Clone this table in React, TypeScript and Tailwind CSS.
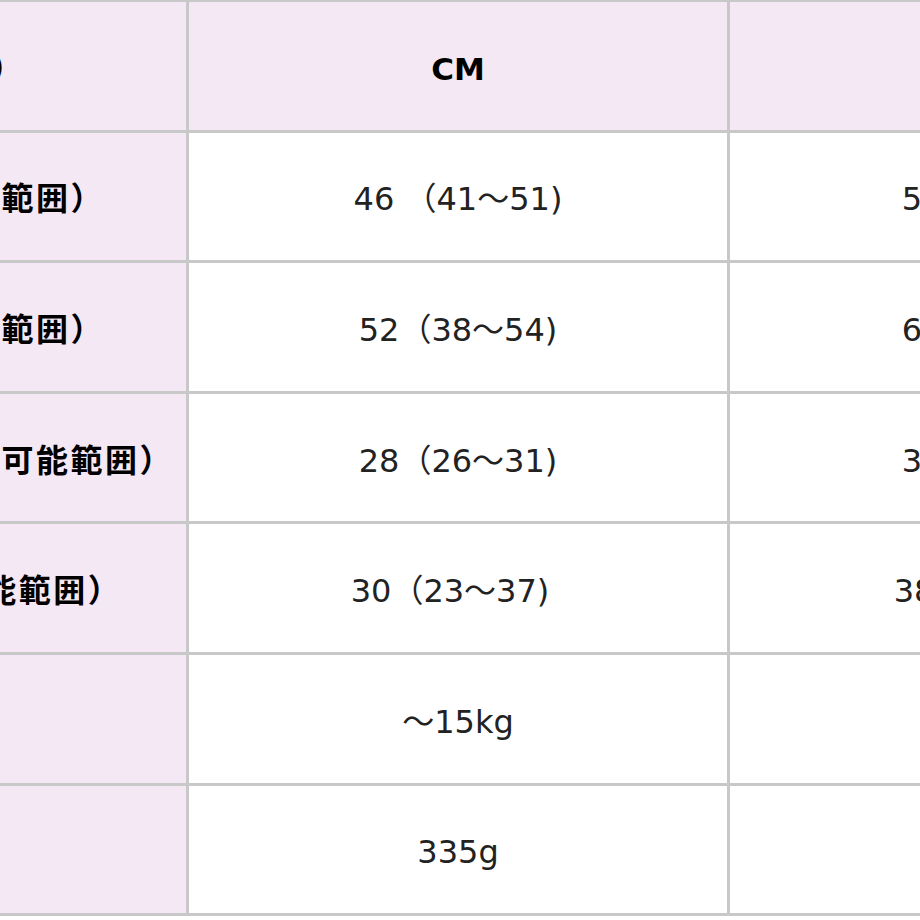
import React from "react";

const labels = [
  "サイズ（単位）",
  "肩ベルト（調節可能範囲）",
  "ウエスト（調節可能範囲）",
  "背当て部分の高さ（調節可能範囲）",
  "腰ベルト長（調節可能範囲）",
  "対象体重",
  "重量",
];

const col2 = [
  "CM",
  "46 （41～51)",
  "52（38～54)",
  "28（26～31)",
  "30（23～37)",
  "～15kg",
  "335g",
];

const col3 = [
  "INCH",
  "56（50～60)",
  "64（58～70)",
  "34（30～38)",
  "38（30～46)",
  "～33lb",
  "11.8oz",
];

export default function App() {
  return (
    <div className="w-[920px] h-[920px] overflow-hidden bg-white font-['DejaVu_Sans','Noto_Sans_CJK_JP',sans-serif]">
      <div className="-ml-[393px] -mt-px w-fit grid grid-cols-[576px_538px_542px] gap-[3px] p-[3px] bg-[#c8c8c8]">
        {labels.map((label, i) => {
          const head = i === 0;
          return (
            <React.Fragment key={i}>
              <div className="h-[127.6px] pt-[6px] bg-[#f4e8f4] flex items-center justify-center">
                <span
                  className={
                    "text-[32px] font-bold tracking-[2.5px] text-black whitespace-nowrap " +
                    (head ? "pl-[14px]" : "")
                  }
                >
                  {label}
                </span>
              </div>
              <div
                className={
                  "h-[127.6px] pt-[6px] flex items-center justify-center " +
                  (head ? "bg-[#f4e8f4]" : "bg-white")
                }
              >
                {head ? (
                  <span className="text-[31px] font-bold text-black">{col2[i]}</span>
                ) : (
                  <span
                    className={
                      "text-[32px] text-[#222] whitespace-nowrap " +
                      (i === 4 ? "pr-[16px]" : "")
                    }
                  >
                    {col2[i]}
                  </span>
                )}
              </div>
              <div
                className={
                  "h-[127.6px] pt-[6px] flex items-center justify-center " +
                  (head ? "bg-[#f4e8f4]" : "bg-white")
                }
              >
                {head ? (
                  <span className="text-[31px] font-bold text-black">{col3[i]}</span>
                ) : (
                  <span
                    className={
                      "text-[32px] text-[#222] whitespace-nowrap " +
                      (i === 4 ? "pr-[16px]" : "")
                    }
                  >
                    {col3[i]}
                  </span>
                )}
              </div>
            </React.Fragment>
          );
        })}
      </div>
    </div>
  );
}
